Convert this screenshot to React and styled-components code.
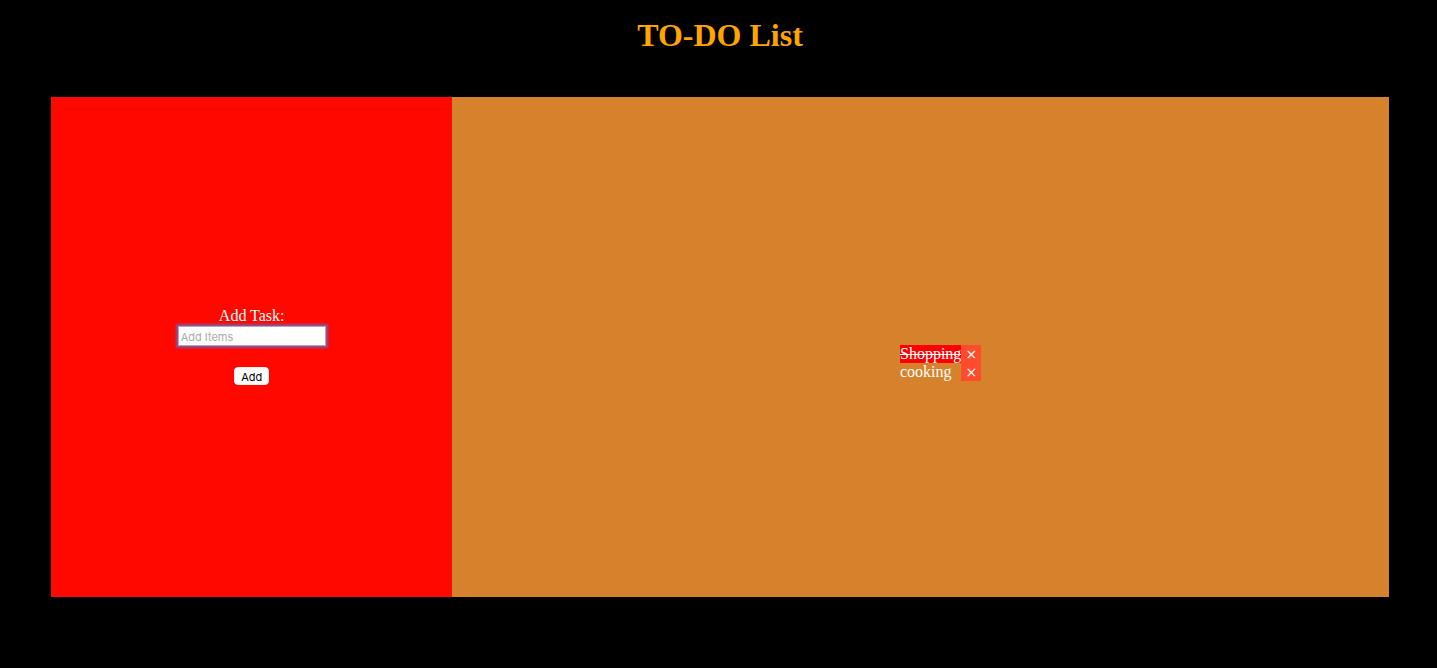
import React, { useState } from "react";
import styled, { createGlobalStyle } from "styled-components";

const GlobalStyle = createGlobalStyle`
  body {
    margin: 0;
    background: #000;
    color: #fff;
    font: 16px/18px "Liberation Serif", serif;
  }
`;

const Page = styled.main`
  padding: 16px 48px 0 51px;
`;

const Title = styled.h1`
  margin: 0 0 43px;
  color: orange;
  font-size: 32px;
  line-height: 38px;
  text-align: center;
`;

const Board = styled.div`
  display: grid;
  grid-template-columns: 3fr 7fr;
  min-height: 500px;
`;

const FormPanel = styled.form`
  box-sizing: border-box;
  display: flex;
  flex-direction: column;
  align-items: center;
  justify-content: center;
  padding-bottom: 2px;
  background: #ff0800;
`;

const FieldLabel = styled.label`
  margin-bottom: 1px;
`;

const Field = styled.input`
  box-sizing: border-box;
  width: 148px;
  height: 20px;
  margin: 0 0 21px;
  padding: 3px 2px 1px;
  border: 1px solid #b9a5c8;
  outline: none;
  background: #fff;
  box-shadow: 0 0 2px 2px #8c5490;
  color: #000;
  font: 11px/14px Inter, sans-serif;

  &::placeholder {
    color: #a9a9a9;
  }
`;

const AddButton = styled.button`
  height: 18px;
  padding: 2px 6px 0;
  border: 1px solid #fff0f0;
  border-radius: 4px;
  background: #fff;
  color: #000;
  font: 11px/14px Inter, sans-serif;
`;

const ListPanel = styled.section`
  display: flex;
  align-items: center;
  justify-content: center;
  background: #d6822d;
`;

const TaskList = styled.ul`
  margin: 32px 0 0 40px;
  padding: 0;
  list-style: none;
`;

const Task = styled.li`
  display: flex;
  justify-content: space-between;
  background: ${({ $done }) => ($done ? "#ff0000" : "transparent")};
`;

const TaskName = styled.span`
  text-decoration: ${({ $done }) => ($done ? "line-through" : "none")};
`;

const RemoveButton = styled.button`
  display: flex;
  align-items: center;
  justify-content: center;
  width: 20px;
  height: 18px;
  padding: 0;
  border: 0;
  background: #ff4b2d;
  color: #fff;
  font: 14px/18px "DejaVu Sans", sans-serif;
`;

export default function App() {
  const [tasks, setTasks] = useState([
    { name: "Shopping", done: true },
    { name: "cooking", done: false },
  ]);
  const [text, setText] = useState("");

  const addTask = (event) => {
    event.preventDefault();
    if (!text.trim()) return;
    setTasks([...tasks, { name: text.trim(), done: false }]);
    setText("");
  };

  return (
    <Page>
      <GlobalStyle />
      <Title>TO-DO List</Title>
      <Board>
        <FormPanel onSubmit={addTask}>
          <FieldLabel htmlFor="task">Add Task:</FieldLabel>
          <Field
            id="task"
            placeholder="Add Items"
            value={text}
            onChange={(event) => setText(event.target.value)}
          />
          <AddButton type="submit">Add</AddButton>
        </FormPanel>
        <ListPanel>
          <TaskList>
            {tasks.map((task, index) => (
              <Task key={index} $done={task.done}>
                <TaskName $done={task.done}>{task.name}</TaskName>
                <RemoveButton
                  type="button"
                  aria-label={`Remove ${task.name}`}
                  onClick={() => setTasks(tasks.filter((_, i) => i !== index))}
                >
                  ×
                </RemoveButton>
              </Task>
            ))}
          </TaskList>
        </ListPanel>
      </Board>
    </Page>
  );
}
